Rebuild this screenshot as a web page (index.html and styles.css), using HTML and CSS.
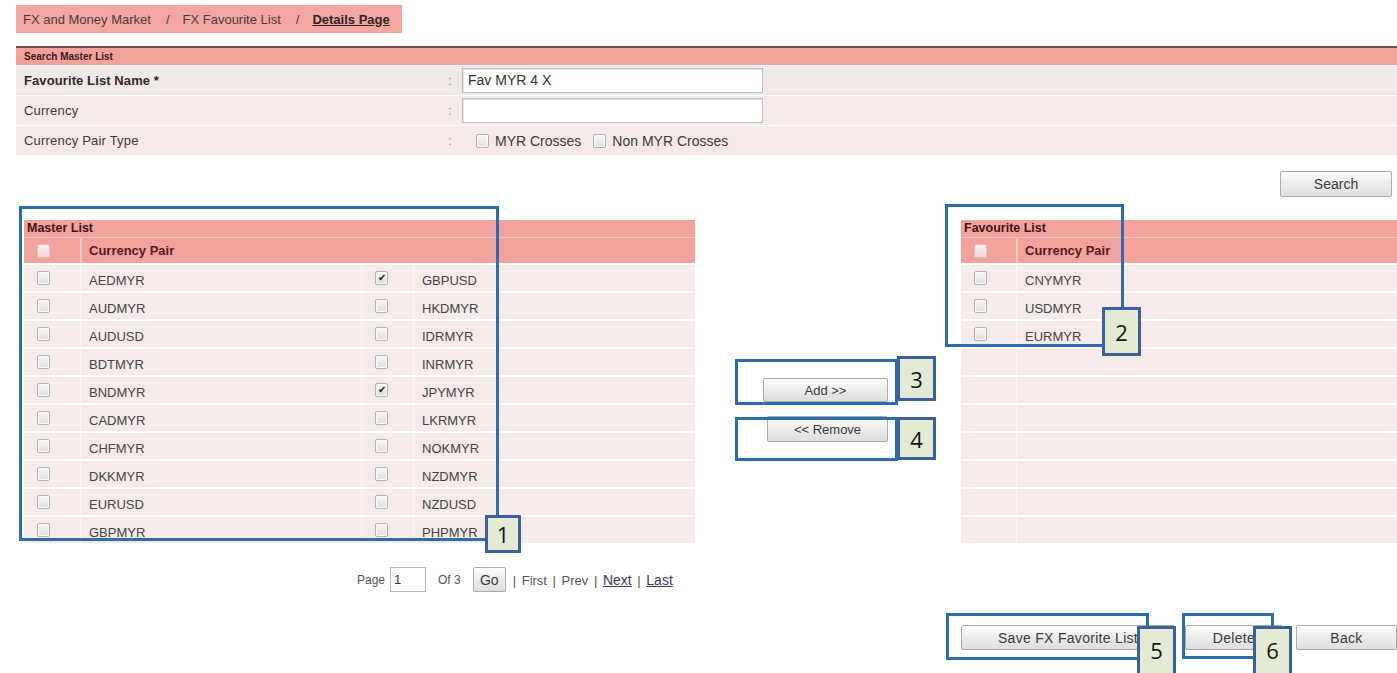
FILE: index.html
```html
<!DOCTYPE html>
<html lang="en">
<head>
<meta charset="utf-8">
<title>FX Favourite List - Details Page</title>
<link rel="stylesheet" href="styles.css">
</head>
<body>
<div class="page">
  <nav class="crumbs">
    <span>FX and Money Market</span><span class="sep">/</span><span>FX Favourite List</span><span class="sep">/</span><a class="current">Details Page</a>
  </nav>

  <section class="search">
    <div class="sec-head">Search Master List</div>
    <div class="frow">
      <span class="lbl strong">Favourite List Name *</span><span class="colon">:</span>
      <span class="input">Fav MYR 4 X</span>
    </div>
    <div class="frow">
      <span class="lbl">Currency</span><span class="colon">:</span>
      <span class="input"></span>
    </div>
    <div class="frow">
      <span class="lbl">Currency Pair Type</span><span class="colon">:</span>
      <span class="opts">
        <span class="cb"></span><span class="opt">MYR Crosses</span>
        <span class="cb"></span><span class="opt">Non MYR Crosses</span>
      </span>
    </div>
  </section>

  <div class="search-bar"><button class="btn btn-search">Search</button></div>

  <div class="lists">
    <div class="master">
      <div class="t-title">Master List</div>
      <div class="t-head"><span class="hc"><span class="cb cb-head"></span></span><span class="ht">Currency Pair</span></div>
      <div class="rows rows-master">
        <div class="row"><span class="c"><span class="cb"></span></span><span class="p">AEDMYR</span><span class="c"><span class="cb on">&#10004;</span></span><span class="p">GBPUSD</span></div>
        <div class="row"><span class="c"><span class="cb"></span></span><span class="p">AUDMYR</span><span class="c"><span class="cb"></span></span><span class="p">HKDMYR</span></div>
        <div class="row"><span class="c"><span class="cb"></span></span><span class="p">AUDUSD</span><span class="c"><span class="cb"></span></span><span class="p">IDRMYR</span></div>
        <div class="row"><span class="c"><span class="cb"></span></span><span class="p">BDTMYR</span><span class="c"><span class="cb"></span></span><span class="p">INRMYR</span></div>
        <div class="row"><span class="c"><span class="cb"></span></span><span class="p">BNDMYR</span><span class="c"><span class="cb on">&#10004;</span></span><span class="p">JPYMYR</span></div>
        <div class="row"><span class="c"><span class="cb"></span></span><span class="p">CADMYR</span><span class="c"><span class="cb"></span></span><span class="p">LKRMYR</span></div>
        <div class="row"><span class="c"><span class="cb"></span></span><span class="p">CHFMYR</span><span class="c"><span class="cb"></span></span><span class="p">NOKMYR</span></div>
        <div class="row"><span class="c"><span class="cb"></span></span><span class="p">DKKMYR</span><span class="c"><span class="cb"></span></span><span class="p">NZDMYR</span></div>
        <div class="row"><span class="c"><span class="cb"></span></span><span class="p">EURUSD</span><span class="c"><span class="cb"></span></span><span class="p">NZDUSD</span></div>
        <div class="row"><span class="c"><span class="cb"></span></span><span class="p">GBPMYR</span><span class="c"><span class="cb"></span></span><span class="p">PHPMYR</span></div>
      </div>
    </div>

    <div class="mover">
      <button class="btn btn-add">Add &gt;&gt;</button>
      <button class="btn btn-remove">&lt;&lt; Remove</button>
    </div>

    <div class="fav">
      <div class="t-title">Favourite List</div>
      <div class="t-head"><span class="hc"><span class="cb cb-head"></span></span><span class="ht">Currency Pair</span></div>
      <div class="rows rows-fav">
        <div class="row"><span class="c"><span class="cb"></span></span><span class="p">CNYMYR</span></div>
        <div class="row"><span class="c"><span class="cb"></span></span><span class="p">USDMYR</span></div>
        <div class="row"><span class="c"><span class="cb"></span></span><span class="p">EURMYR</span></div>
        <div class="row"><span class="c"></span><span class="p"></span></div>
        <div class="row"><span class="c"></span><span class="p"></span></div>
        <div class="row"><span class="c"></span><span class="p"></span></div>
        <div class="row"><span class="c"></span><span class="p"></span></div>
        <div class="row"><span class="c"></span><span class="p"></span></div>
        <div class="row"><span class="c"></span><span class="p"></span></div>
        <div class="row"><span class="c"></span><span class="p"></span></div>
      </div>
    </div>
  </div>

  <div class="pager">
    <span>Page</span>
    <span class="pg-input">1</span>
    <span class="of">Of 3</span>
    <button class="btn btn-go">Go</button>
    <span class="nav">| First | Prev | <a>Next</a> | <a>Last</a></span>
  </div>

  <div class="actions">
    <button class="btn btn-save">Save FX Favorite List</button>
    <button class="btn btn-delete">Delete</button>
    <button class="btn btn-back">Back</button>
  </div>

  <!-- numbered guide frames laid over the form -->
  <div class="frame f1"></div>
  <div class="frame f2"></div>
  <div class="frame f3"></div>
  <div class="frame f4"></div>
  <div class="frame f5"></div>
  <div class="frame f6"></div>
  <div class="tag t1">1</div>
  <div class="tag t2">2</div>
  <div class="tag t3">3</div>
  <div class="tag t4">4</div>
  <div class="tag t5">5</div>
  <div class="tag t6">6</div>
</div>
</body>
</html>
```
FILE: styles.css
```css
* { box-sizing: border-box; }

body {
  margin: 0;
  background: #fff;
  font-family: "Liberation Sans", Arial, sans-serif;
  color: #3c3a3a;
  overflow: hidden;
}

.page {
  position: relative;
  width: 1397px;
  height: 673px;
  padding: 5px 0 0 16px;
}

/* breadcrumb */
.crumbs {
  display: flex;
  align-items: center;
  width: 386px;
  height: 28px;
  padding: 0 0 0 7px;
  background: #f4a7a2;
  font-size: 13px;
  color: #4d3b3a;
  white-space: nowrap;
}
.crumbs .sep { padding: 0 13px 0 15px; }
.crumbs .current {
  font-weight: bold;
  text-decoration: underline;
  color: #2e2222;
}

/* search form */
.search {
  margin-top: 13px;
  border-top: 2px solid #7b4c49;
  background: #f6e9e8;
}
.sec-head {
  height: 17px;
  line-height: 17px;
  padding-left: 8px;
  background: #f2a19c;
  font-size: 10px;
  font-weight: bold;
  color: #3b1b1b;
}
.frow {
  display: grid;
  grid-template-columns: 424px 14px 1fr;
  align-items: center;
  height: 30px;
  padding-left: 8px;
  border-top: 1px solid #fff;
  font-size: 13px;
}
.frow:nth-of-type(2) { background: #f1e9e8; }
.lbl { letter-spacing: 0.2px; }
.lbl.strong { font-weight: bold; color: #2f2a2a; letter-spacing: 0.1px; }
.colon { color: #999; }
.input {
  display: block;
  width: 301px;
  height: 25px;
  padding: 0 5px;
  border: 1px solid #bdbdbd;
  background: #fff;
  box-shadow: inset 1px 1px 0 #e4e4e4;
  font-size: 14px;
  line-height: 23px;
  color: #333;
}
.opts { display: flex; align-items: center; padding-left: 14px; font-size: 14px; }
.opts .cb { margin-right: 6px; }
.opt { margin-right: 12px; }

/* checkboxes */
.cb {
  display: inline-flex;
  align-items: center;
  justify-content: center;
  width: 13px;
  height: 14px;
  border: 1px solid #b2b2b2;
  border-radius: 2px;
  background: linear-gradient(#f7f7f7, #e0e0e0);
  box-shadow: inset 0 0 0 1px #fafafa;
  font-size: 10px;
  line-height: 1;
  color: #222;
}
.cb-head {
  border-color: #e6c3c0;
  background: linear-gradient(#fbeeed, #f1d9d7);
  box-shadow: none;
}

/* buttons */
.btn {
  height: 26px;
  padding: 0;
  border: 1px solid #ababab;
  border-radius: 2px;
  background: linear-gradient(#fdfdfd, #ececec 50%, #dedede);
  font-family: "Liberation Sans", Arial, sans-serif;
  font-size: 13px;
  color: #3a3a3a;
}
.search-bar {
  display: flex;
  justify-content: flex-end;
  margin-top: 16px;
  padding-right: 5px;
}
.btn-search { width: 112px; font-size: 14px; }

/* list panels */
.lists {
  display: flex;
  margin-top: 23px;
}
.master { width: 671px; margin-left: 8px; }
.fav { flex: 1; }

.t-title {
  height: 17px;
  line-height: 17px;
  padding-left: 3px;
  background: #f2a19c;
  font-size: 12.5px;
  font-weight: bold;
  color: #3e1616;
}
.t-head {
  display: grid;
  grid-template-columns: 56px 1fr;
  height: 26px;
  border-top: 1px solid #f6c5c1;
  background: #f2a19c;
}
.fav .t-head { grid-template-columns: 55px 1fr; }
.hc { display: flex; align-items: center; padding-left: 13px; }
.ht {
  display: flex;
  align-items: center;
  padding-left: 7px;
  border-left: 2px solid #f7cdca;
  font-size: 13px;
  font-weight: bold;
  color: #561c1c;
}

.row {
  display: grid;
  height: 28px;
  border-top: 2px solid #fff;
  font-size: 13px;
  color: #444;
}
.rows-master .row { grid-template-columns: 56px 281px 52px 1fr; }
.rows-fav .row { grid-template-columns: 55px 1fr; }
.row > span {
  display: flex;
  align-items: center;
  background: #f6eaea;
}
.row > span + span { border-left: 1px solid #fbf4f4; }
.row .c { padding-left: 13px; }
.row .p { padding-left: 8px; padding-top: 4px; }

/* add / remove */
.mover {
  display: flex;
  flex-direction: column;
  align-items: flex-end;
  gap: 14px;
  width: 266px;
  padding: 158px 73px 0 0;
}
.btn-add { width: 125px; height: 24px; }
.btn-remove { width: 121px; height: 26px; }

/* pager */
.pager {
  display: flex;
  align-items: center;
  height: 25px;
  margin: 24px 0 0 341px;
  font-size: 12px;
  color: #555;
}
.pg-input {
  width: 36px;
  height: 25px;
  margin-left: 5px;
  padding-left: 3px;
  border: 1px solid #bdbdbd;
  background: #fff;
  font-size: 13px;
  line-height: 23px;
  color: #333;
}
.of { margin-left: 12px; }
.btn-go { width: 33px; height: 25px; margin-left: 12px; font-size: 14px; }
.nav { margin-left: 7px; font-size: 13px; word-spacing: 2px; }
.nav a { text-decoration: underline; color: #3a3a5a; font-size: 14px; }

/* bottom actions */
.actions {
  display: flex;
  margin: 33px 0 0 945px;
}
.actions .btn { height: 25px; font-size: 14px; letter-spacing: 0.3px; }
.btn-save { width: 214px; }
.btn-delete { width: 98px; margin-left: 10px; }
.btn-back { width: 101px; margin-left: 13px; }

/* numbered guide frames */
.frame {
  position: absolute;
  border: 3px solid #2d6cb1;
}
.f1 { left: 19px; top: 206px; width: 480px; height: 335px; }
.f2 { left: 945px; top: 204px; width: 179px; height: 143px; }
.f3 { left: 735px; top: 359px; width: 163px; height: 46px; }
.f4 { left: 735px; top: 417px; width: 163px; height: 44px; }
.f5 { left: 946px; top: 613px; width: 203px; height: 47px; }
.f6 { left: 1182px; top: 613px; width: 92px; height: 46px; }

.tag {
  position: absolute;
  display: flex;
  align-items: center;
  justify-content: center;
  width: 39px;
  border: 3px solid #3c5f9d;
  background: #e3ebd5;
  font-family: "Open Sans", "DejaVu Sans", sans-serif;
  font-size: 22px;
  color: #151515;
}
.t1 { left: 485px; top: 515px; width: 36px; height: 38px; }
.t2 { left: 1102px; top: 307px; height: 49px; }
.t3 { left: 897px; top: 356px; height: 45px; }
.t4 { left: 897px; top: 417px; height: 43px; }
.t5 { left: 1137px; top: 626px; height: 50px; padding-bottom: 3px; }
.t6 { left: 1253px; top: 626px; height: 50px; padding-bottom: 3px; }
```
